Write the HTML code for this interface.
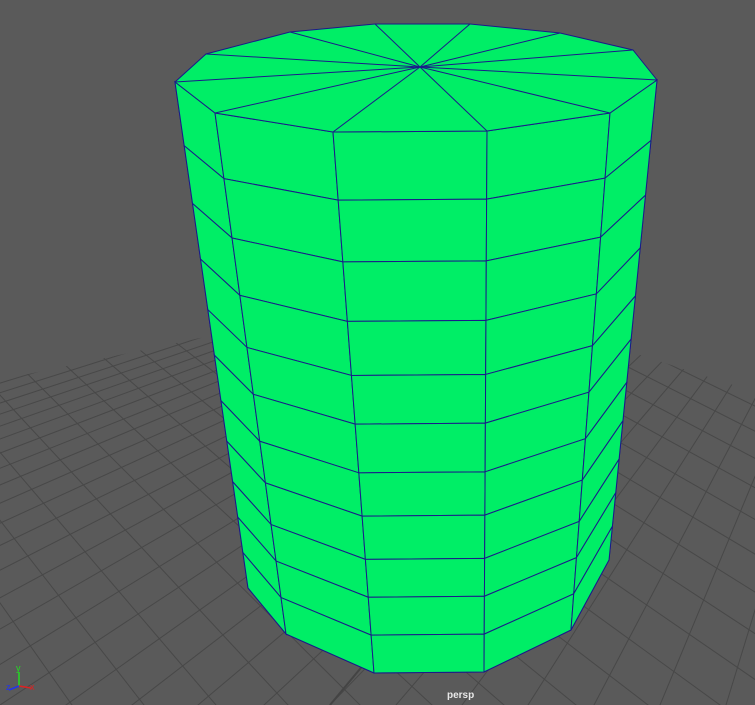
<!DOCTYPE html>
<html><head><style>
html,body{margin:0;padding:0;background:#5a5a5a;width:755px;height:705px;overflow:hidden;font-family:"Liberation Sans",sans-serif}
#lbl{position:absolute;left:447px;top:690px;color:#e8e8e8;font-size:10px;font-weight:bold;line-height:12px}
svg{display:block}
</style></head><body>
<svg id="s" width="755" height="705" style="position:absolute;left:0;top:0">
<defs><clipPath id="gc"><polygon points="0,380 200,338 420,325 640,355 755,392 755,705 0,705"/></clipPath></defs>
<g id="grid" clip-path="url(#gc)" stroke="#484848" stroke-width="1"></g>
<g id="cyl"></g>
<g stroke-width="1.5">
<line x1="19" y1="686" x2="19" y2="672" stroke="#22dd22"/>
<line x1="19" y1="686" x2="31" y2="688" stroke="#dd2222"/>
<line x1="19" y1="686" x2="9" y2="690" stroke="#2233ee"/>
</g>
<text x="16" y="671" fill="#22dd22" font-size="9" font-family="Liberation Sans">y</text>
<text x="30" y="690" fill="#dd2222" font-size="9" font-family="Liberation Sans">x</text>
<text x="6" y="690" fill="#2233ee" font-size="9" font-family="Liberation Sans">z</text>
</svg>
<div id="lbl">persp</div>
<script>
var NS="http://www.w3.org/2000/svg";
function el(p,t,a){var e=document.createElementNS(NS,t);for(var k in a)e.setAttribute(k,a[k]);p.appendChild(e);return e;}
var g=document.getElementById('grid');
var vA=[909,106],vB=[-607,-258];
for(var i=-30;i<15;i++){var bx=i*66;el(g,'line',{x1:vA[0],y1:vA[1],x2:bx+(bx-vA[0])*2,y2:705+(705-vA[1])*2});}
for(var i=-8;i<60;i++){var bx=i*72;el(g,'line',{x1:vB[0],y1:vB[1],x2:bx+(bx-vB[0])*2,y2:705+(705-vB[1])*2});}
el(g,'line',{x1:600,y1:380,x2:330,y2:705,stroke:'#444','stroke-width':2});
var c=document.getElementById('cyl');
var tv=[[175,82],[215,113],[333,132],[487,131],[610,113],[657,80],[633,50],[560,33],[470,24],[375,24],[290,32],[206,54]];
var bv=[[248,588],[286,634],[374,673],[484,672],[571,630],[609,560]];
var ts=[0,.126,.24,.35,.45,.54,.63,.71,.79,.86,.93,1];
function P(j,t){return [tv[j][0]+(bv[j][0]-tv[j][0])*t, tv[j][1]+(bv[j][1]-tv[j][1])*t];}
var col='#00ee66',ln='#1a1a8a';
var pts=[];for(var j=0;j<6;j++)pts.push(tv[j].join(','));for(var j=5;j>=0;j--)pts.push(bv[j].join(','));
el(c,'polygon',{points:pts.join(' '),fill:col,stroke:ln,'stroke-width':1});
for(var j=0;j<5;j++)for(var r=0;r<11;r++){
 var a=P(j,ts[r]),b=P(j+1,ts[r]),d=P(j+1,ts[r+1]),e=P(j,ts[r+1]);
 el(c,'polygon',{points:[a,b,d,e].map(function(p){return p.join(',')}).join(' '),fill:col,stroke:ln,'stroke-width':1});
}
var tp=tv.map(function(p){return p.join(',')}).join(' ');
el(c,'polygon',{points:tp,fill:col,stroke:ln,'stroke-width':1});
for(var j=0;j<12;j++)el(c,'line',{x1:420,y1:67,x2:tv[j][0],y2:tv[j][1],stroke:ln,'stroke-width':1});
</script>
</body></html>
